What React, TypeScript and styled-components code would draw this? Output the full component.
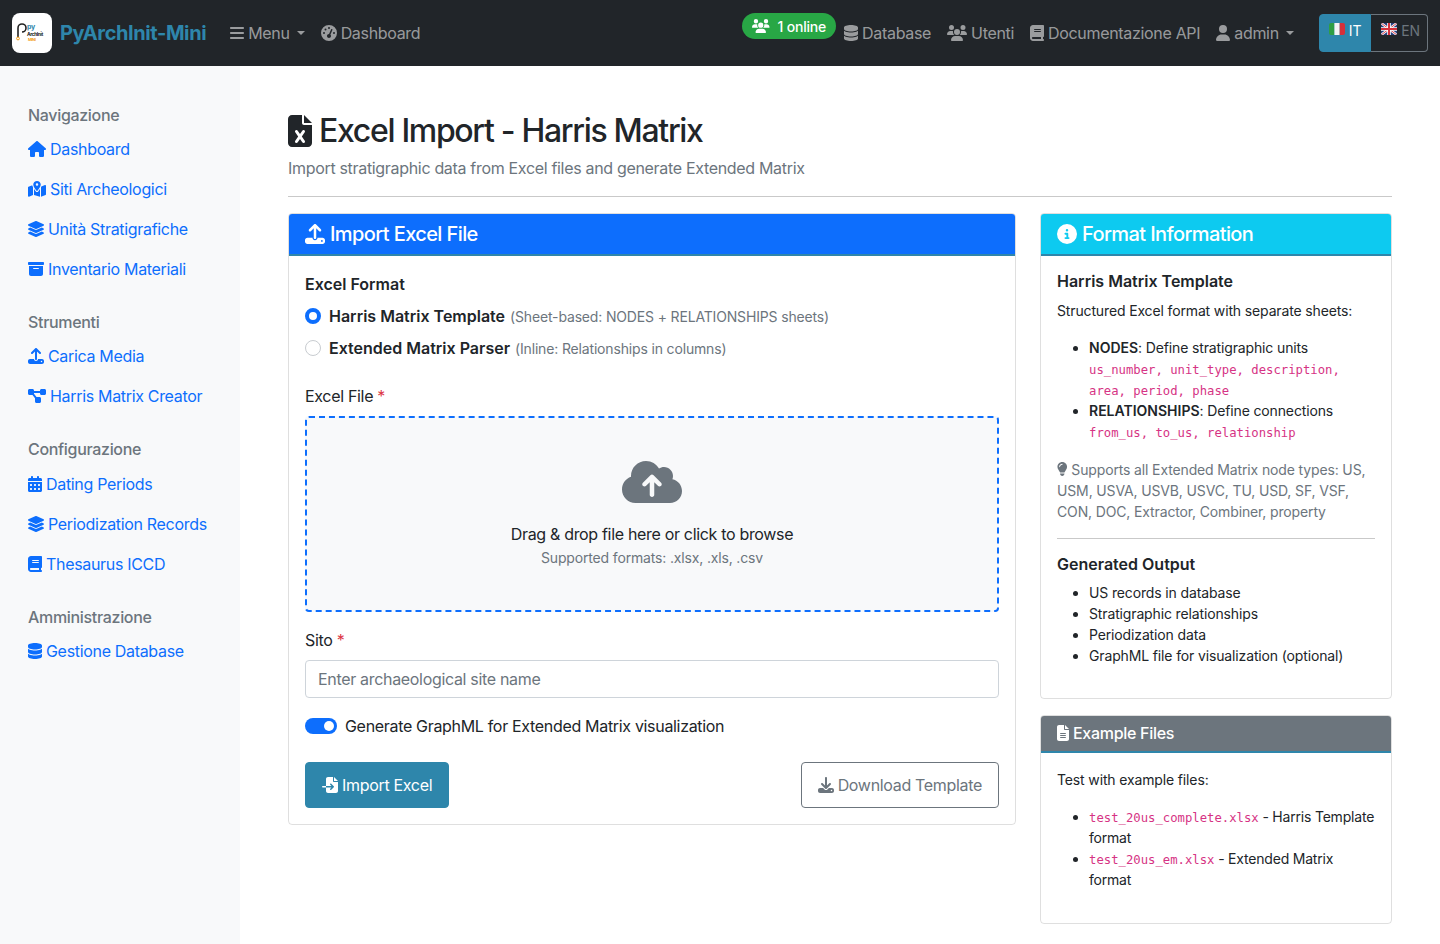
import * as React from "react";
import styled, { createGlobalStyle } from "styled-components";
import { FaLayerGroup } from "react-icons/fa";
import {
  FaBars,
  FaBook,
  FaBoxArchive,
  FaCalendarDays,
  FaCircleInfo,
  FaCloudArrowUp,
  FaDatabase,
  FaDiagramProject,
  FaDownload,
  FaFileExcel,
  FaFileImport,
  FaFileLines,
  FaGaugeHigh,
  FaHouse,
  FaLightbulb,
  FaMapLocationDot,
  FaUpload,
  FaUser,
  FaUsers,
} from "react-icons/fa6";

const primary = "#2e86ab";

const GlobalStyle = createGlobalStyle`
  * {
    box-sizing: border-box;
  }

  html, body {
    margin: 0;
    background: #fff;
    color: #212529;
    font-family: Inter, "Liberation Sans", sans-serif;
    font-size: 16px;
    line-height: 1.5;
    letter-spacing: -0.32px;
  }

  svg {
    flex: none;
  }

  /* icons keep the width of their glyph, like the icon font did */
  svg[viewBox="0 0 384 512"] { width: 0.75em; }
  svg[viewBox="0 0 448 512"] { width: 0.875em; }
  svg[viewBox="0 0 576 512"] { width: 1.125em; }
  svg[viewBox="0 0 640 512"] { width: 1.25em; }
`;

const Navbar = styled.nav`
  display: flex;
  align-items: center;
  height: 66px;
  padding: 0 12px;
  background: #212529;
`;

const Brand = styled.div`
  display: flex;
  align-items: center;
  gap: 8px;
  margin-right: 16px;
  font-size: 20px;
  font-weight: 700;
  letter-spacing: -0.4px;
  color: ${primary};
`;

const LogoBox = styled.div`
  width: 40px;
  height: 40px;
  border-radius: 8px;
  background: #fff;
  overflow: hidden;
`;

const LogoMark = styled.svg`
  display: block;
  width: 40px;
  height: 40px;
`;

const NavLink = styled.a`
  display: flex;
  align-items: center;
  gap: 4px;
  padding: 8px;
  color: rgba(255, 255, 255, 0.55);
  white-space: nowrap;
`;

const Caret = styled.span`
  width: 0;
  height: 0;
  margin-left: 3px;
  border-top: 4.8px solid currentColor;
  border-left: 4.8px solid transparent;
  border-right: 4.8px solid transparent;
`;

const NavRight = styled.div`
  display: flex;
  align-items: center;
  margin-left: auto;
`;

const OnlineBadge = styled.span`
  display: flex;
  align-items: center;
  gap: 8px;
  height: 26px;
  margin-top: -14px;
  padding: 0 10px;
  border-radius: 13px;
  background: #28a745;
  color: #fff;
  font-size: 14px;
  font-weight: 500;
  letter-spacing: -0.2px;
`;

const LangGroup = styled.div`
  display: flex;
  height: 38px;
  margin-left: 17px;
`;

const LangButton = styled.a<{ $active?: boolean }>`
  display: flex;
  align-items: flex-start;
  gap: 4px;
  padding: ${(p) => (p.$active ? "5px 9px 0 9px" : "5px 7px 0 10px")};
  border: 1px solid ${(p) => (p.$active ? primary : "#6c757d")};
  border-left-width: ${(p) => (p.$active ? "1px" : "0")};
  border-radius: ${(p) => (p.$active ? "4px 0 0 4px" : "0 4px 4px 0")};
  background: ${(p) => (p.$active ? primary : "transparent")};
  color: ${(p) => (p.$active ? "#fff" : "#6c757d")};
  font-size: 14px;
  letter-spacing: -0.14px;
`;

const FlagIcon = styled.svg`
  width: 16px;
  height: 12px;
  margin-top: 3px;
  border-radius: 2px;
`;

const Layout = styled.div`
  display: flex;
  min-height: 878px;
`;

const Sidebar = styled.aside`
  flex: 0 0 240px;
  padding: 40px 16px 0 28px;
  background: #f8f9fa;
`;

const SideSection = styled.section`
  margin-bottom: 24px;
`;

const SideHeading = styled.h6`
  margin: 0 0 4px;
  font-size: 16px;
  font-weight: 500;
  line-height: 1.2;
  color: #6c757d;
`;

const SideLink = styled.a`
  display: flex;
  align-items: center;
  gap: 4px;
  height: 40px;
  color: #0d6efd;
  white-space: nowrap;
`;

const Main = styled.main`
  flex: 1;
  min-width: 0;
  padding: 46px 48px 20px;
`;

const PageTitle = styled.h1`
  display: flex;
  align-items: center;
  gap: 7px;
  margin: 0 0 6px;
  font-size: 32px;
  font-weight: 500;
  line-height: 1.2;
  letter-spacing: -1.32px;
`;

const PageLead = styled.p`
  margin: 0;
  color: #6c757d;
`;

const Divider = styled.hr`
  margin: 16px 0;
  border: 0;
  border-top: 1px solid #c9c9c9;
`;

const Columns = styled.div`
  display: grid;
  grid-template-columns: 728px 352px;
  gap: 24px;
  align-items: start;
`;

const Stack = styled.div`
  display: flex;
  flex-direction: column;
  gap: 16px;
`;

const Card = styled.section`
  border: 1px solid rgba(0, 0, 0, 0.125);
  border-radius: 4px;
  overflow: hidden;
`;

const CardHeader = styled.h5<{ $bg: string; $small?: boolean }>`
  display: flex;
  align-items: center;
  gap: ${(p) => (p.$small ? 4 : 5)}px;
  margin: 0;
  padding: 8px 16px;
  border-bottom: 2px solid ${primary};
  background: ${(p) => p.$bg};
  color: #fff;
  font-size: ${(p) => (p.$small ? 16 : 20)}px;
  font-weight: 500;
  line-height: 1.2;
  letter-spacing: ${(p) => (p.$small ? -0.3 : -0.6)}px;
`;

const CardBody = styled.div`
  padding: 16px;
`;

const InfoBody = styled(CardBody)`
  font-size: 14px;
  line-height: 21px;
  letter-spacing: -0.14px;
`;

const Label = styled.div<{ $bold?: boolean }>`
  margin-bottom: 8px;
  font-weight: ${(p) => (p.$bold ? 600 : 400)};
  letter-spacing: ${(p) => (p.$bold ? 0 : -0.32)}px;
`;

const Required = styled.span`
  color: #dc3545;
`;

const RadioRow = styled.label`
  display: flex;
  align-items: center;
  gap: 8px;
  margin-bottom: 8px;
`;

const RadioDot = styled.span<{ $checked?: boolean }>`
  flex: none;
  width: 16px;
  height: 16px;
  border-radius: 50%;
  border: ${(p) => (p.$checked ? "4px solid #0d6efd" : "1px solid #c8ccd0")};
  background: #fff;
`;

const RadioTitle = styled.span`
  font-weight: 600;
  letter-spacing: 0;
`;

const Hint = styled.small`
  margin-left: 5px;
  font-size: 14px;
  letter-spacing: -0.16px;
  color: #6c757d;
`;

const FormatGroup = styled.div`
  margin-bottom: 24px;
`;

const DropZone = styled.div`
  display: flex;
  flex-direction: column;
  align-items: center;
  margin-bottom: 16px;
  padding: 40px 16px 42px;
  border: 2px dashed #0d6efd;
  border-radius: 4px;
  background: #f8f9fa;
`;

const CloudIcon = styled(FaCloudArrowUp)`
  margin-bottom: 16px;
  font-size: 48px;
  color: #6c757d;
`;

const DropHint = styled.div`
  margin-top: 1px;
  font-size: 14px;
  line-height: 21px;
  letter-spacing: -0.16px;
  color: #6c757d;
`;

const TextField = styled.input`
  display: block;
  width: 100%;
  height: 38px;
  margin-bottom: 16px;
  padding: 6px 12px;
  border: 1px solid #ced4da;
  border-radius: 4px;
  font: inherit;
  letter-spacing: inherit;
  color: #212529;

  &::placeholder {
    color: #6c757d;
    opacity: 1;
  }
`;

const SwitchRow = styled.div`
  display: flex;
  align-items: center;
  gap: 8px;
  margin-bottom: 24px;
`;

const SwitchTrack = styled.span`
  display: flex;
  justify-content: flex-end;
  align-items: center;
  width: 32px;
  height: 16px;
  padding: 3px;
  border-radius: 8px;
  background: #0d6efd;
`;

const SwitchKnob = styled.span`
  width: 10px;
  height: 10px;
  border-radius: 50%;
  background: #fff;
`;

const ButtonRow = styled.div`
  display: flex;
  justify-content: space-between;
`;

const Button = styled.button<{ $outline?: boolean }>`
  display: flex;
  align-items: center;
  gap: 4px;
  height: 46px;
  padding: 0 16px;
  border: 1px solid ${(p) => (p.$outline ? "#6c757d" : primary)};
  border-radius: 4px;
  background: ${(p) => (p.$outline ? "#fff" : primary)};
  color: ${(p) => (p.$outline ? "#6c757d" : "#fff")};
  font: inherit;
  letter-spacing: inherit;
`;

const InfoTitle = styled.h6`
  margin: 0 0 8px;
  font-size: 16px;
  font-weight: 600;
  line-height: 1.2;
  letter-spacing: 0;
`;

const InfoText = styled.p`
  margin: 0 0 16px;
`;

const InfoNote = styled.p`
  margin: 17px 0 16px;
  color: #6c757d;

  svg {
    vertical-align: -1px;
  }
`;

const InfoList = styled.ul`
  margin: 0 0 16px;
  padding-left: 32px;
`;

const ExampleList = styled(InfoList)`
  margin-bottom: 17px;
  letter-spacing: -0.2px;
`;

const Code = styled.code`
  font-family: "DejaVu Sans Mono", "Liberation Mono", monospace;
  font-size: 12.25px;
  line-height: 1;
  letter-spacing: 0;
  color: #d63384;
`;

const Strong = styled.strong`
  font-weight: 600;
  letter-spacing: 0;
`;

const sideSections = [
  {
    title: "Navigazione",
    links: [
      { icon: <FaHouse />, text: "Dashboard" },
      { icon: <FaMapLocationDot />, text: "Siti Archeologici" },
      { icon: <FaLayerGroup />, text: "Unità Stratigrafiche" },
      { icon: <FaBoxArchive />, text: "Inventario Materiali" },
    ],
  },
  {
    title: "Strumenti",
    links: [
      { icon: <FaUpload />, text: "Carica Media" },
      { icon: <FaDiagramProject />, text: "Harris Matrix Creator" },
    ],
  },
  {
    title: "Configurazione",
    links: [
      { icon: <FaCalendarDays />, text: "Dating Periods" },
      { icon: <FaLayerGroup />, text: "Periodization Records" },
      { icon: <FaBook />, text: "Thesaurus ICCD" },
    ],
  },
  {
    title: "Amministrazione",
    links: [{ icon: <FaDatabase />, text: "Gestione Database" }],
  },
];

const Logo = () => (
  <LogoBox>
    <LogoMark viewBox="0 0 40 40">
      <path d="M6 24V15a4 4 0 1 1 4 4" fill="none" stroke="#222" strokeWidth="1.6" />
      <circle cx="6" cy="25.5" r="1.4" fill="none" stroke="#f39c12" strokeWidth="1" />
      <text x="15" y="16" fontFamily="Inter" fontSize="7" fontWeight="700" fill="#2e86ab">py</text>
      <text x="15" y="22.5" fontFamily="Inter" fontSize="4.9" fontWeight="700" fill="#222">ArchInit</text>
      <text x="16" y="27.8" fontFamily="Inter" fontSize="4" fontWeight="700" fill="#f39c12">MINI</text>
    </LogoMark>
  </LogoBox>
);

const ItalianFlag = () => (
  <FlagIcon viewBox="0 0 16 12">
    <rect width="5.4" height="12" fill="#2f9e44" />
    <rect x="5.4" width="5.3" height="12" fill="#f4f4f4" />
    <rect x="10.7" width="5.3" height="12" fill="#d6303a" />
  </FlagIcon>
);

const BritishFlag = () => (
  <FlagIcon viewBox="0 0 16 12">
    <rect width="16" height="12" fill="#27407f" />
    <path d="M0 0l16 12M16 0L0 12" stroke="#fff" strokeWidth="2.4" />
    <path d="M0 0l16 12M16 0L0 12" stroke="#d6303a" strokeWidth="0.9" />
    <path d="M8 0v12M0 6h16" stroke="#fff" strokeWidth="3.6" />
    <path d="M8 0v12M0 6h16" stroke="#d6303a" strokeWidth="2" />
  </FlagIcon>
);

const App = () => (
  <>
    <GlobalStyle />
    <Navbar>
      <Brand>
        <Logo />
        PyArchInit-Mini
      </Brand>
      <NavLink>
        <FaBars />
        Menu
        <Caret />
      </NavLink>
      <NavLink>
        <FaGaugeHigh />
        Dashboard
      </NavLink>
      <NavRight>
        <OnlineBadge>
          <FaUsers />1 online
        </OnlineBadge>
        <NavLink>
          <FaDatabase />
          Database
        </NavLink>
        <NavLink>
          <FaUsers />
          Utenti
        </NavLink>
        <NavLink>
          <FaBook />
          Documentazione API
        </NavLink>
        <NavLink>
          <FaUser />
          admin
          <Caret />
        </NavLink>
        <LangGroup>
          <LangButton $active>
            <ItalianFlag />
            IT
          </LangButton>
          <LangButton>
            <BritishFlag />
            EN
          </LangButton>
        </LangGroup>
      </NavRight>
    </Navbar>
    <Layout>
      <Sidebar>
        {sideSections.map((section) => (
          <SideSection key={section.title}>
            <SideHeading>{section.title}</SideHeading>
            {section.links.map((link) => (
              <SideLink key={link.text}>
                {link.icon}
                {link.text}
              </SideLink>
            ))}
          </SideSection>
        ))}
      </Sidebar>
      <Main>
        <PageTitle>
          <FaFileExcel />
          Excel Import - Harris Matrix
        </PageTitle>
        <PageLead>Import stratigraphic data from Excel files and generate Extended Matrix</PageLead>
        <Divider />
        <Columns>
          <Card>
            <CardHeader $bg="#0d6efd">
              <FaUpload />
              Import Excel File
            </CardHeader>
            <CardBody>
              <FormatGroup>
                <Label $bold>Excel Format</Label>
                <RadioRow>
                  <RadioDot $checked />
                  <span>
                    <RadioTitle>Harris Matrix Template</RadioTitle>
                    <Hint>(Sheet-based: NODES + RELATIONSHIPS sheets)</Hint>
                  </span>
                </RadioRow>
                <RadioRow>
                  <RadioDot />
                  <span>
                    <RadioTitle>Extended Matrix Parser</RadioTitle>
                    <Hint>(Inline: Relationships in columns)</Hint>
                  </span>
                </RadioRow>
              </FormatGroup>
              <Label>
                Excel File <Required>*</Required>
              </Label>
              <DropZone>
                <CloudIcon />
                <div>Drag &amp; drop file here or click to browse</div>
                <DropHint>Supported formats: .xlsx, .xls, .csv</DropHint>
              </DropZone>
              <Label>
                Sito <Required>*</Required>
              </Label>
              <TextField placeholder="Enter archaeological site name" />
              <SwitchRow>
                <SwitchTrack>
                  <SwitchKnob />
                </SwitchTrack>
                Generate GraphML for Extended Matrix visualization
              </SwitchRow>
              <ButtonRow>
                <Button>
                  <FaFileImport />
                  Import Excel
                </Button>
                <Button $outline>
                  <FaDownload />
                  Download Template
                </Button>
              </ButtonRow>
            </CardBody>
          </Card>
          <Stack>
            <Card>
              <CardHeader $bg="#0dcaf0">
                <FaCircleInfo />
                Format Information
              </CardHeader>
              <InfoBody>
                <InfoTitle>Harris Matrix Template</InfoTitle>
                <InfoText>Structured Excel format with separate sheets:</InfoText>
                <InfoList>
                  <li>
                    <Strong>NODES</Strong>: Define stratigraphic units
                    <br />
                    <Code>us_number, unit_type, description, area, period, phase</Code>
                  </li>
                  <li>
                    <Strong>RELATIONSHIPS</Strong>: Define connections
                    <br />
                    <Code>from_us, to_us, relationship</Code>
                  </li>
                </InfoList>
                <InfoNote>
                  <FaLightbulb /> Supports all Extended Matrix node types: US, USM, USVA, USVB, USVC, TU, USD, SF, VSF,
                  CON, DOC, Extractor, Combiner, property
                </InfoNote>
                <Divider />
                <InfoTitle>Generated Output</InfoTitle>
                <InfoList>
                  <li>US records in database</li>
                  <li>Stratigraphic relationships</li>
                  <li>Periodization data</li>
                  <li>GraphML file for visualization (optional)</li>
                </InfoList>
              </InfoBody>
            </Card>
            <Card>
              <CardHeader $bg="#6c757d" $small>
                <FaFileLines />
                Example Files
              </CardHeader>
              <InfoBody>
                <InfoText>Test with example files:</InfoText>
                <ExampleList>
                  <li>
                    <Code>test_20us_complete.xlsx</Code> - Harris Template format
                  </li>
                  <li>
                    <Code>test_20us_em.xlsx</Code> - Extended Matrix format
                  </li>
                </ExampleList>
              </InfoBody>
            </Card>
          </Stack>
        </Columns>
      </Main>
    </Layout>
  </>
);

export default App;
